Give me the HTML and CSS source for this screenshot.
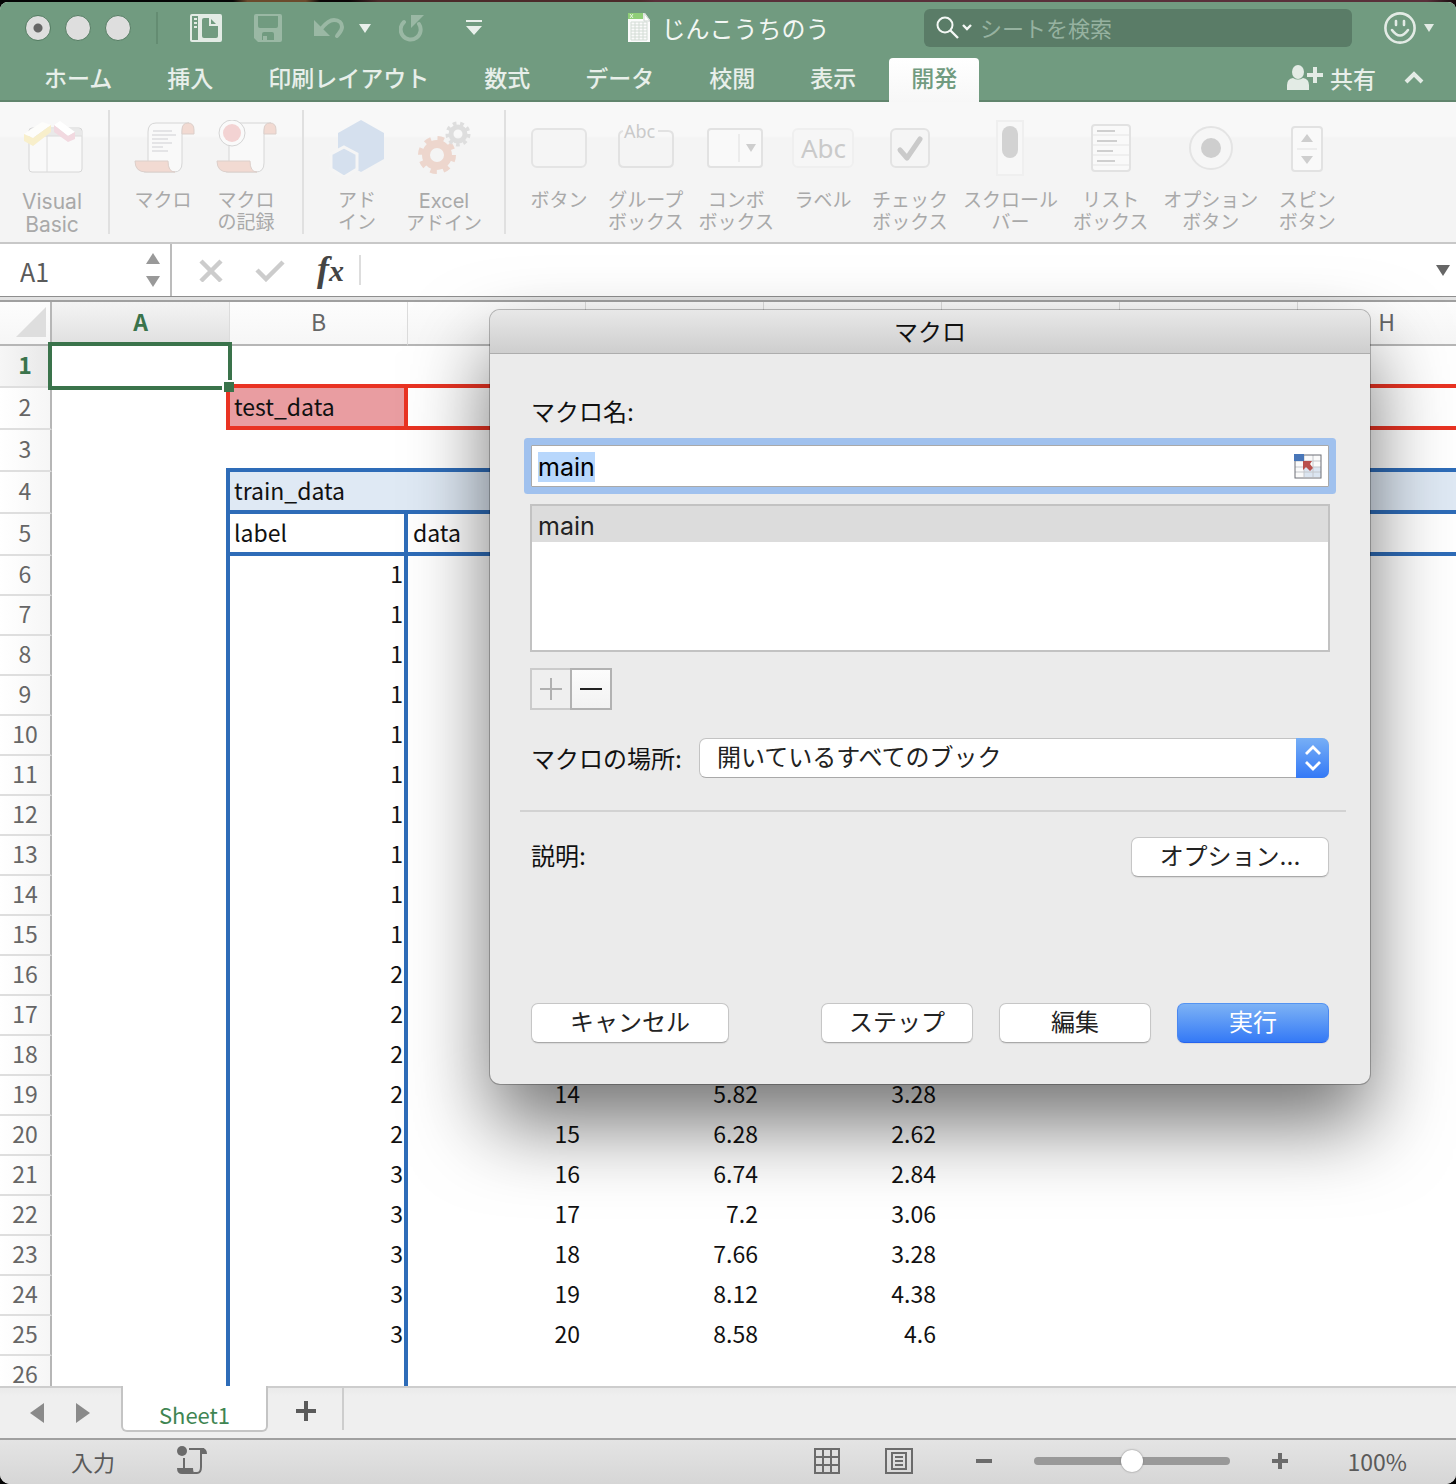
FILE: index.html
```html
<!DOCTYPE html>
<html lang="ja">
<head>
<meta charset="utf-8">
<title>じんこうちのう</title>
<link rel="stylesheet" href="styles.css">
</head>
<body>
<div class="window">
  <header class="titlebar">
    <div class="title-left">
      <div class="lights">
        <button class="light light-edited" aria-label="閉じる"></button>
        <button class="light" aria-label="しまう"></button>
        <button class="light" aria-label="拡大"></button>
      </div>
      <span class="title-rule"></span>
      <button class="plain tool-gallery" aria-label="ギャラリー">
        <svg width="32" height="28" viewBox="0 0 32 28"><path fill="#e3ebe5" fill-rule="evenodd" d="M2 0h28a2 2 0 0 1 2 2v24a2 2 0 0 1-2 2H2a2 2 0 0 1-2-2V2a2 2 0 0 1 2-2zM2 2v24h6V2zM14 4a2 2 0 0 0-2 2v16a2 2 0 0 0 2 2h12a2 2 0 0 0 2-2V12L20 4z"/><path d="M4 4h3v2H4zM4 8h3v2H4zM4 12h3v2H4z" fill="#e3ebe5"/><path d="M20 4v7h8" fill="none" stroke="#e3ebe5" stroke-width="2"/></svg>
      </button>
      <button class="plain tool-save" aria-label="保存" disabled>
        <svg width="28" height="28" viewBox="0 0 28 28"><path fill="#9ab8a4" fill-rule="evenodd" d="M2 0h24a2 2 0 0 1 2 2v24a2 2 0 0 1-2 2H4l-4-4V2a2 2 0 0 1 2-2zM4 2v10a2 2 0 0 0 2 2h16a2 2 0 0 0 2-2V2zM8 20v6h1v-4h4v4h7v-6a2 2 0 0 0-2-2h-8a2 2 0 0 0-2 2z"/></svg>
      </button>
      <button class="plain tool-undo" aria-label="元に戻す" disabled>
        <svg width="31" height="22" viewBox="0 0 31 22"><path d="M1 3v16h16z" fill="#9ab8a4"/><path d="M8 12c4-5 8-9 13-9 5 0 8 3 8 7 0 4-3 6-5 9" fill="none" stroke="#9ab8a4" stroke-width="4" stroke-linecap="round"/></svg>
      </button>
      <button class="plain tool-undo-menu" aria-label="元に戻す履歴">
        <svg width="12" height="9" viewBox="0 0 12 9"><path d="M0 0h12L6 9z" fill="#e9f0eb"/></svg>
      </button>
      <button class="plain tool-redo" aria-label="やり直し" disabled>
        <svg width="26" height="28" viewBox="0 0 26 28"><path d="M5 8a10 10 0 1 0 15 2" fill="none" stroke="#9ab8a4" stroke-width="4" stroke-linecap="round"/><path d="M12 1h13L12 14z" fill="#9ab8a4"/></svg>
      </button>
      <button class="plain tool-custom" aria-label="クイック アクセスのカスタマイズ">
        <svg width="18" height="16" viewBox="0 0 18 16"><path d="M1 0h16v2H1zM1 6h16l-8 9z" fill="#e9f0eb"/></svg>
      </button>
    </div>
    <div class="doc-title">
      <svg width="24" height="30" viewBox="0 0 24 30"><path d="M1 0h17l5 7v22H1z" fill="#fbfbfb"/><path d="M1 0h15v6H1z" fill="#8fce78"/><path d="M3 1l3 4M6 1L3 5" stroke="#e6f5df"/><path d="M17 0l6 8h-6z" fill="#fff" stroke="#cdd5cf"/><path d="M4 9h16v18H4zM4 12h16M4 15h16M4 18h16M4 21h16M4 24h16M8 9v18M12 9v18M16 9v18" fill="none" stroke="#d3dcd5"/></svg>
      <span class="doc-name">じんこうちのう</span>
    </div>
    <div class="title-right">
      <label class="search">
        <svg width="38" height="26" viewBox="0 0 38 26"><circle cx="9" cy="10" r="7.5" fill="none" stroke="#f4f8f5" stroke-width="2"/><path d="M14 15l8 8M27 10l4 4 4-4" fill="none" stroke="#f4f8f5" stroke-width="2.4"/></svg>
        <input type="text" placeholder="シートを検索" aria-label="シートを検索">
      </label>
      <button class="plain smile" aria-label="フィードバック">
        <svg width="50" height="32" viewBox="0 0 50 32"><circle cx="16" cy="16" r="14.6" fill="none" stroke="#e3ebe5" stroke-width="2.6"/><path d="M8 18q8 11 16 0M12 9v4M20 9v4" fill="none" stroke="#e3ebe5" stroke-width="2.6" stroke-linecap="round"/><path d="M40 12h10l-5 8z" fill="#e3ebe5"/></svg>
      </button>
    </div>
  </header>

  <nav class="tabs">
    <button class="tab">ホーム</button>
    <button class="tab">挿入</button>
    <button class="tab">印刷レイアウト</button>
    <button class="tab">数式</button>
    <button class="tab">データ</button>
    <button class="tab">校閲</button>
    <button class="tab">表示</button>
    <button class="tab tab-active">開発</button>
    <div class="share">
      <button class="plain share-button">
        <svg width="36" height="26" viewBox="0 0 36 26"><ellipse cx="11" cy="7" rx="6" ry="7" fill="#e3ebe5"/><path d="M0 25v-5q0-6 6-7 5 3 10 0 6 1 6 7v5zM20 8h6V2h4v6h6v4h-6v6h-4v-6h-6z" fill="#e3ebe5"/></svg>
        <span>共有</span>
      </button>
      <button class="plain" aria-label="リボンを折りたたむ">
        <svg width="20" height="14" viewBox="0 0 20 14"><path d="M2 11l8-8 8 8" fill="none" stroke="#e3ebe5" stroke-width="4"/></svg>
      </button>
    </div>
  </nav>

  <section class="ribbon">
    <div class="group group-first">
      <button class="command" disabled>
        <svg width="64" height="56" viewBox="0 0 64 56"><rect x="9" y="8" width="53" height="44" rx="3" fill="#f9f9f9" stroke="#d6d6d6"/><path d="M10 9h51v7H10z" fill="#e9e9e9"/><path d="M9 16h53M27 16v36" stroke="#dcdcdc"/><path d="M4 14L22 2l9 3-18 13z" fill="#fdfdfb"/><path d="M4 14l9 4 18-13v7L13 26l-9-5z" fill="#f8efcb"/><path d="M34 5l6-4 15 11-7 4z" fill="#fff"/><path d="M34 5l14 11 7-4v7l-7 3-14-10z" fill="#f2d9e0"/></svg>
        <span class="label label-latin">Visual<br>Basic</span>
      </button>
    </div>
    <div class="group">
      <button class="command" disabled>
        <svg width="64" height="56" viewBox="0 0 64 56"><path d="M17 41V12q0-9 8-9h33q-7 1-7 9v31q0 9-8 9H13" fill="#f9f9f9" stroke="#d6d6d6"/><path d="M51 14V10q0-7 6-7t6 7v4z" fill="#f2dad2" stroke="#dccfca"/><path d="M4 41h33q0 11 7 11H15Q4 52 4 41z" fill="#f2dad2" stroke="#dccfca"/><path d="M22 11h19M21 15h24M21 19h16M21 23h20M21 27h11M21 31h16" stroke="#e4e4e6" stroke-width="2"/></svg>
        <span class="label">マクロ</span>
      </button>
      <button class="command" disabled>
        <svg width="64" height="56" viewBox="0 0 64 56"><path d="M15 41V3h42q-7 1-7 9v31q0 9-8 9H12" fill="#f9f9f9" stroke="#d6d6d6"/><path d="M50 14V10q0-7 6-7t6 7v4z" fill="#f2dad2" stroke="#dccfca"/><path d="M3 41h33q0 11 7 11H14Q3 52 3 41z" fill="#f2dad2" stroke="#dccfca"/><circle cx="18" cy="13" r="13" fill="#fafafa" stroke="#d4d4d4"/><circle cx="18" cy="13" r="9" fill="#f3d3d3"/></svg>
        <span class="label">マクロ<br>の記録</span>
      </button>
    </div>
    <div class="group">
      <button class="command" disabled>
        <svg width="64" height="56" viewBox="0 0 64 56"><path d="M36 0l23 13v26L36 52 13 39V13z" fill="#d5e0ee"/><path d="M19 27l13 7v15l-13 8-13-8V34z" fill="#d5e0ee" stroke="#f5f5f5" stroke-width="3"/></svg>
        <span class="label">アド<br>イン</span>
      </button>
      <button class="command" disabled>
        <svg width="64" height="56" viewBox="0 0 64 56"><circle cx="25" cy="35" r="11" fill="none" stroke="#edd6cd" stroke-width="8"/><circle cx="25" cy="35" r="16.500" fill="none" stroke="#edd6cd" stroke-width="5" stroke-dasharray="6.480 6.480"/><circle cx="46" cy="14" r="7" fill="none" stroke="#dedede" stroke-width="5"/><circle cx="46" cy="14" r="10.500" fill="none" stroke="#dedede" stroke-width="4" stroke-dasharray="3.665 3.665"/></svg>
        <span class="label"><span class="latin">Excel</span><br>アドイン</span>
      </button>
    </div>
    <div class="group group-last">
      <button class="command" disabled>
        <svg width="64" height="56" viewBox="0 0 64 56"><rect x="5" y="9" width="54" height="38" rx="5" fill="#f5f5f5" stroke="#e4e4e4" stroke-width="2"/></svg>
        <span class="label">ボタン</span>
      </button>
      <button class="command" disabled>
        <svg width="64" height="56" viewBox="0 0 64 56"><path d="M9 11q-4 1-4 5v26q0 5 5 5h44q5 0 5-5V16q0-5-5-5H44" fill="none" stroke="#e2e2e2" stroke-width="2"/><text x="10" y="18" class="icon-text-small">Abc</text></svg>
        <span class="label">グループ<br>ボックス</span>
      </button>
      <button class="command" disabled>
        <svg width="64" height="56" viewBox="0 0 64 56"><rect x="4" y="9" width="54" height="38" rx="3" fill="#f9f9f9" stroke="#e2e2e2" stroke-width="2"/><path d="M35 14v28" stroke="#ececec" stroke-width="2"/><path d="M42 24h10l-5 8z" fill="#cecece"/></svg>
        <span class="label">コンボ<br>ボックス</span>
      </button>
      <button class="command" disabled>
        <svg width="64" height="56" viewBox="0 0 64 56"><rect x="2" y="9" width="60" height="38" rx="5" fill="#f6f6f6" stroke="#efefef" stroke-width="2"/><text x="10" y="38" class="icon-text-large">Abc</text></svg>
        <span class="label">ラベル</span>
      </button>
      <button class="command" disabled>
        <svg width="64" height="56" viewBox="0 0 64 56"><rect x="13" y="9" width="38" height="38" rx="5" fill="#f5f5f5" stroke="#e3e3e3" stroke-width="2"/><path d="M22 30l7 8 13-19" fill="none" stroke="#cacaca" stroke-width="5" stroke-linecap="round" stroke-linejoin="round"/></svg>
        <span class="label">チェック<br>ボックス</span>
      </button>
      <button class="command" disabled>
        <svg width="64" height="56" viewBox="0 0 64 56"><rect x="19" y="1" width="26" height="54" fill="#f7f7f7" stroke="#efefef" stroke-width="2"/><rect x="24" y="6" width="16" height="32" rx="8" fill="#d2d2d2"/></svg>
        <span class="label">スクロール<br>バー</span>
      </button>
      <button class="command" disabled>
        <svg width="64" height="56" viewBox="0 0 64 56"><rect x="13" y="5" width="38" height="46" rx="3" fill="#f9f9f9" stroke="#e2e2e2" stroke-width="2"/><path d="M14 15h36M14 25h36M14 35h36M14 45h36" stroke="#efefef" stroke-width="2"/><path d="M18 11h18M18 21h20M18 31h16M18 41h18" stroke="#cfcfcf" stroke-width="2"/></svg>
        <span class="label">リスト<br>ボックス</span>
      </button>
      <button class="command" disabled>
        <svg width="64" height="56" viewBox="0 0 64 56"><circle cx="32" cy="28" r="21" fill="#f6f6f6" stroke="#e4e4e4" stroke-width="2"/><circle cx="32" cy="28" r="10" fill="#cecece"/></svg>
        <span class="label">オプション<br>ボタン</span>
      </button>
      <button class="command" disabled>
        <svg width="64" height="56" viewBox="0 0 64 56"><rect x="17" y="7" width="30" height="44" rx="3" fill="#f9f9f9" stroke="#e2e2e2" stroke-width="2"/><path d="M22 29h20" stroke="#ededed" stroke-width="2"/><path d="M26 22h12l-6-8zM26 36h12l-6 8z" fill="#cecece"/></svg>
        <span class="label">スピン<br>ボタン</span>
      </button>
    </div>
  </section>

  <section class="formula-bar">
    <div class="name-box">
      <input type="text" value="A1" aria-label="名前ボックス">
      <div class="name-steps">
        <button class="plain" aria-label="上へ"><svg width="14" height="11" viewBox="0 0 14 11"><path d="M0 11h14L7 0z" fill="#999"/></svg></button>
        <button class="plain" aria-label="下へ"><svg width="14" height="11" viewBox="0 0 14 11"><path d="M0 0h14L7 11z" fill="#999"/></svg></button>
      </div>
    </div>
    <div class="formula-tools">
      <button class="plain" aria-label="キャンセル" disabled><svg width="24" height="24" viewBox="0 0 24 24"><path d="M2 3l20 20M22 3L2 23" stroke="#ccc" stroke-width="4.500"/></svg></button>
      <button class="plain" aria-label="入力" disabled><svg width="30" height="24" viewBox="0 0 30 24"><path d="M2 12l9 9L28 4" fill="none" stroke="#ccc" stroke-width="4.500"/></svg></button>
      <button class="plain fx" aria-label="関数の挿入"><span class="fx-f">f</span><span class="fx-x">x</span></button>
    </div>
    <input class="formula-input" type="text" aria-label="数式">
    <button class="plain" aria-label="数式バーを広げる"><svg width="14" height="11" viewBox="0 0 14 11"><path d="M0 0h14L7 11z" fill="#666"/></svg></button>
  </section>

  <main class="sheet">
    <table class="grid">
      <colgroup><col class="col-head"><col><col><col><col><col><col><col><col></colgroup>
      <thead>
        <tr><th class="corner"><svg width="30" height="30" viewBox="0 0 30 30"><path d="M30 0v30H0z" fill="#dedede"/></svg></th><th class="col-on">A</th><th>B</th><th></th><th></th><th></th><th></th><th></th><th>H</th></tr>
      </thead>
      <tbody>
        <tr class="tall"><th class="row-on">1</th><td class="selected"><span class="cursor"></span><span class="handle"></span></td><td></td><td></td><td></td><td></td><td></td><td></td><td></td></tr>
        <tr class="tall test"><th>2</th><td></td><td class="lead">test_data</td><td></td><td></td><td></td><td></td><td></td><td></td></tr>
        <tr class="tall"><th>3</th><td></td><td></td><td></td><td></td><td></td><td></td><td></td><td></td></tr>
        <tr class="tall train"><th>4</th><td></td><td class="lead">train_data</td><td></td><td></td><td></td><td></td><td></td><td></td></tr>
        <tr class="tall fields"><th>5</th><td></td><td class="lead">label</td><td>data</td><td></td><td></td><td></td><td></td><td></td></tr>
        <tr class="num"><th>6</th><td></td><td class="lead">1</td><td></td><td></td><td></td><td></td><td></td><td></td></tr>
        <tr class="num"><th>7</th><td></td><td class="lead">1</td><td></td><td></td><td></td><td></td><td></td><td></td></tr>
        <tr class="num"><th>8</th><td></td><td class="lead">1</td><td></td><td></td><td></td><td></td><td></td><td></td></tr>
        <tr class="num"><th>9</th><td></td><td class="lead">1</td><td></td><td></td><td></td><td></td><td></td><td></td></tr>
        <tr class="num"><th>10</th><td></td><td class="lead">1</td><td></td><td></td><td></td><td></td><td></td><td></td></tr>
        <tr class="num"><th>11</th><td></td><td class="lead">1</td><td></td><td></td><td></td><td></td><td></td><td></td></tr>
        <tr class="num"><th>12</th><td></td><td class="lead">1</td><td></td><td></td><td></td><td></td><td></td><td></td></tr>
        <tr class="num"><th>13</th><td></td><td class="lead">1</td><td></td><td></td><td></td><td></td><td></td><td></td></tr>
        <tr class="num"><th>14</th><td></td><td class="lead">1</td><td></td><td></td><td></td><td></td><td></td><td></td></tr>
        <tr class="num"><th>15</th><td></td><td class="lead">1</td><td></td><td></td><td></td><td></td><td></td><td></td></tr>
        <tr class="num"><th>16</th><td></td><td class="lead">2</td><td></td><td></td><td></td><td></td><td></td><td></td></tr>
        <tr class="num"><th>17</th><td></td><td class="lead">2</td><td></td><td></td><td></td><td></td><td></td><td></td></tr>
        <tr class="num"><th>18</th><td></td><td class="lead">2</td><td></td><td></td><td></td><td></td><td></td><td></td></tr>
        <tr class="num"><th>19</th><td></td><td class="lead">2</td><td>14</td><td>5.82</td><td>3.28</td><td></td><td></td><td></td></tr>
        <tr class="num"><th>20</th><td></td><td class="lead">2</td><td>15</td><td>6.28</td><td>2.62</td><td></td><td></td><td></td></tr>
        <tr class="num"><th>21</th><td></td><td class="lead">3</td><td>16</td><td>6.74</td><td>2.84</td><td></td><td></td><td></td></tr>
        <tr class="num"><th>22</th><td></td><td class="lead">3</td><td>17</td><td>7.2</td><td>3.06</td><td></td><td></td><td></td></tr>
        <tr class="num"><th>23</th><td></td><td class="lead">3</td><td>18</td><td>7.66</td><td>3.28</td><td></td><td></td><td></td></tr>
        <tr class="num"><th>24</th><td></td><td class="lead">3</td><td>19</td><td>8.12</td><td>4.38</td><td></td><td></td><td></td></tr>
        <tr class="num"><th>25</th><td></td><td class="lead">3</td><td>20</td><td>8.58</td><td>4.6</td><td></td><td></td><td></td></tr>
        <tr class="num"><th>26</th><td></td><td class="lead"></td><td></td><td></td><td></td><td></td><td></td><td></td></tr>
      </tbody>
    </table>
  </main>

  <footer>
    <div class="sheet-bar">
      <button class="plain" aria-label="前のシート"><svg width="14" height="20" viewBox="0 0 14 20"><path d="M14 0v20L0 10z" fill="#8a8a8a"/></svg></button>
      <button class="plain sheet-next" aria-label="次のシート"><svg width="14" height="20" viewBox="0 0 14 20"><path d="M0 0v20l14-10z" fill="#8a8a8a"/></svg></button>
      <button class="sheet-tab">Sheet1</button>
      <button class="plain sheet-add" aria-label="シートの追加"><svg width="20" height="20" viewBox="0 0 20 20"><path d="M8 0h4v8h8v4h-8v8H8v-8H0V8h8z" fill="#5a5a5a"/></svg></button>
    </div>
    <div class="status-bar">
      <span class="status-mode">入力</span>
      <button class="plain" aria-label="マクロの記録"><svg width="32" height="30" viewBox="0 0 32 30"><circle cx="5" cy="5" r="5" fill="#6b6b6b"/><path d="M7 12v10M12 3h15M24 4v17q0 6-4 6h-3" fill="none" stroke="#6b6b6b" stroke-width="2"/><path d="M23 8V4q1-2 3-2 4 1 4 6zM0 22h16q0 6 4 6H5q-5 0-5-6z" fill="#6b6b6b"/></svg></button>
      <div class="status-right">
        <button class="plain" aria-label="標準"><svg width="26" height="26" viewBox="0 0 26 26"><path d="M1 1h24v24H1zM9 1v24M17 1v24M1 9h24M1 17h24" fill="none" stroke="#6b6b6b" stroke-width="2"/></svg></button>
        <button class="plain view-page" aria-label="ページ レイアウト"><svg width="28" height="26" viewBox="0 0 28 26"><path d="M1 1h26v24H1zM7 5h14v16H7zM10 9h8M10 13h8M10 17h8" fill="none" stroke="#6b6b6b" stroke-width="2"/></svg></button>
        <button class="plain zoom-out" aria-label="縮小"><svg width="16" height="16" viewBox="0 0 16 16"><path d="M0 6h16v4H0z" fill="#6b6b6b"/></svg></button>
        <input class="zoom" type="range" min="0" max="100" value="50" aria-label="ズーム">
        <button class="plain zoom-in" aria-label="拡大"><svg width="16" height="16" viewBox="0 0 16 16"><path d="M6 0h4v6h6v4h-6v6H6v-6H0V6h6z" fill="#6b6b6b"/></svg></button>
        <span class="zoom-value">100%</span>
      </div>
    </div>
  </footer>

  <form class="dialog" role="dialog" aria-labelledby="dialog-title">
    <h1 class="dialog-title" id="dialog-title">マクロ</h1>
    <div class="dialog-body">
      <label class="field-label" for="macro-name">マクロ名:</label>
      <div class="name-field">
        <input type="text" id="macro-name" value="main" autocomplete="off" spellcheck="false">
        <button class="plain" type="button" aria-label="範囲の選択"><svg width="28" height="25" viewBox="0 0 28 25"><rect x="1" y="1" width="26" height="22" fill="#fafafa"/><path d="M10 13h17v10H10z" fill="#dbe5f1"/><path d="M10 1v22M19 1v22M1 7h26M1 13h26M1 18h26" stroke="#c4c7cc"/><rect x="1" y="1" width="26" height="23" fill="none" stroke="#6c6f76"/><path d="M0 0h10v7H0z" fill="#4876b8"/><path d="M9 7h9l-2 3 3 4-3 3-4-4-3 3z" fill="#b9504c"/></svg></button>
      </div>
      <ul class="macro-list"><li>main</li></ul>
      <div class="list-buttons">
        <button type="button" aria-label="追加" disabled><svg width="22" height="22" viewBox="0 0 22 22"><path d="M0 11h22M11 0v22" stroke="#b0b0b0" stroke-width="2"/></svg></button>
        <button type="button" aria-label="削除"><svg width="22" height="22" viewBox="0 0 22 22"><path d="M0 11h22" stroke="#222" stroke-width="2"/></svg></button>
      </div>
      <div class="place">
        <label class="field-label" for="macro-place">マクロの場所:</label>
        <div class="select-wrap">
          <select id="macro-place"><option>開いているすべてのブック</option></select>
          <span class="select-arrows"><svg width="16" height="26" viewBox="0 0 16 26"><path d="M1 9l7-7 7 7M1 17l7 7 7-7" fill="none" stroke="#fff" stroke-width="2.800"/></svg></span>
        </div>
      </div>
      <hr>
      <div class="about">
        <span class="field-label">説明:</span>
        <button class="push push-wide" type="button">オプション...</button>
      </div>
      <div class="actions">
        <button class="push push-wide" type="button">キャンセル</button>
        <button class="push push-step" type="button">ステップ</button>
        <button class="push" type="button">編集</button>
        <button class="push push-default" type="button">実行</button>
      </div>
    </div>
  </form>
</div>
<script>
  const macroName = document.getElementById("macro-name");
  macroName.focus();
  macroName.select();
</script>
</body>
</html>
```

FILE: styles.css
```css
* {
  box-sizing: border-box;
}

body {
  margin: 0;
  padding-top: 2px;
  background: linear-gradient(90deg, #050505 0 16%, #6b4a2c 17% 21%, #0a0606 22% 24%, #4b2a2a 26% 44%, #59303a 45% 98%, #140a0c) top / 100% 4px no-repeat #050505;
  font-family: Inter, "Noto Sans CJK JP", sans-serif;
  color: #222;
}

button,
input,
select {
  font: inherit;
  color: inherit;
}

svg {
  display: block;
  flex: none;
}

.plain {
  display: flex;
  align-items: center;
  border: 0;
  padding: 0;
  background: none;
}

.window {
  position: relative;
  display: flex;
  flex-direction: column;
  height: calc(100vh - 2px);
  border-radius: 8px 8px 10px 10px;
  overflow: hidden;
  background: #fff;
}

/* Title bar */

.titlebar {
  flex: none;
  display: grid;
  grid-template-columns: 1fr auto 1fr;
  align-items: center;
  height: 52px;
  background: #719b80;
}

.title-left,
.lights,
.doc-title,
.title-right {
  display: flex;
  align-items: center;
}

.title-left {
  padding-left: 25px;
}

.lights {
  gap: 14px;
}

.light {
  width: 26px;
  height: 26px;
  padding: 0;
  border: 1px solid #557d63;
  border-radius: 50%;
  background: #dedede;
}

.light-edited {
  background: radial-gradient(circle, #666 0 4px, #dedede 5px);
}

.title-rule {
  width: 2px;
  height: 32px;
  margin: 0 32px 0 25px;
  background: #648c72;
}

.tool-save {
  margin-left: 32px;
}

.tool-undo {
  margin-left: 31px;
}

.tool-undo-menu {
  margin-left: 15px;
}

.tool-redo {
  margin-left: 28px;
}

.tool-custom {
  margin-left: 40px;
}

.doc-title {
  gap: 11px;
  color: #f3f7f4;
  font-size: 24px;
  line-height: 32px;
}

.doc-name {
  padding-top: 4px;
}

.title-right {
  justify-content: flex-end;
  gap: 32px;
  padding-right: 22px;
}

.search {
  display: flex;
  align-items: center;
  gap: 6px;
  width: 428px;
  height: 38px;
  padding: 0 12px;
  border-radius: 6px;
  background: #5a7c67;
}

.search input {
  flex: 1;
  min-width: 0;
  height: 34px;
  padding: 2px 0 0;
  border: 0;
  outline: 0;
  background: none;
  font-size: 22px;
  color: #fff;
}

.search input::placeholder {
  color: #96b2a0;
}

/* Ribbon tabs */

.tabs {
  flex: none;
  display: flex;
  align-items: flex-end;
  gap: 11px;
  height: 48px;
  padding: 0 32px 0 22px;
  background: #719b80;
  box-shadow: inset 0 -2px #61856d;
}

.tab {
  height: 44px;
  padding: 0 22px 2px;
  border: 0;
  border-radius: 4px 4px 0 0;
  background: none;
  color: #e8efea;
  font-size: 23px;
  font-weight: 500;
  line-height: 40px;
}

.tab-active {
  background: linear-gradient(#fff, #f7f7f7);
  color: #719b80;
}

.share {
  display: flex;
  align-items: center;
  gap: 28px;
  height: 48px;
  margin-left: auto;
}

.share-button {
  gap: 7px;
  color: #e8efea;
  font-size: 23px;
  font-weight: 500;
}

/* Ribbon */

.ribbon {
  flex: none;
  display: flex;
  padding: 8px 0;
  border-bottom: 2px solid #c8c8c8;
  background: linear-gradient(#f8f8f8 0 34px, #f4f4f4 36px);
}

.group {
  display: flex;
  gap: 15px;
  padding: 0 22px 0 19px;
  border-right: 2px solid #e0e0e0;
}

.group-first {
  padding-left: 18px;
}

.group-last {
  border-right: 0;
}

.command {
  display: flex;
  flex-direction: column;
  align-items: center;
  gap: 14px;
  min-width: 68px;
  padding: 10px 0 0;
  border: 0;
  background: none;
  color: #a9a9a9;
  font-size: 19px;
  line-height: 22px;
}

.label {
  height: 44px;
  white-space: nowrap;
}

.label-latin {
  font-size: 21px;
  line-height: 23px;
}

.latin {
  font-size: 20px;
}

.icon-text-small,
.icon-text-large {
  font-family: "Noto Sans", sans-serif;
  fill: #cacaca;
}

.icon-text-small {
  font-size: 18px;
}

.icon-text-large {
  font-size: 26px;
}

/* Formula bar */

.formula-bar {
  flex: none;
  display: flex;
  align-items: center;
  height: 58px;
  padding: 0 6px 6px 0;
  background: linear-gradient(#8e8e8e 0 1px, #e2e2e2 1px 4px, #a0a0a0 4px 6px) bottom / 100% 6px no-repeat #fff;
}

.name-box {
  display: flex;
  align-items: center;
  align-self: stretch;
  width: 172px;
  padding: 0 10px 0 20px;
  border-right: 2px solid #bcbcbc;
}

.name-box input {
  flex: 1;
  min-width: 0;
  padding: 2px 0 0;
  border: 0;
  outline: 0;
  background: none;
  color: #5a5a5a;
  font-family: "Noto Sans CJK JP", sans-serif;
  font-size: 25px;
}

.name-steps {
  display: flex;
  flex-direction: column;
  gap: 12px;
}

.formula-tools {
  display: flex;
  align-items: center;
  gap: 32px;
  height: 30px;
  padding: 0 15px 0 27px;
  border-right: 2px solid #ddd;
}

.fx {
  align-items: baseline;
  color: #444;
  font-family: "Liberation Serif", serif;
  font-style: italic;
  font-weight: bold;
}

.fx-f {
  font-size: 36px;
  line-height: 30px;
}

.fx-x {
  font-size: 30px;
  line-height: 30px;
}

.formula-input {
  flex: 1;
  min-width: 0;
  border: 0;
  outline: 0;
}

/* Sheet */

.sheet {
  flex: 1;
  min-height: 0;
  overflow: hidden;
  background: #fff;
}

.grid {
  width: 1476px;
  table-layout: fixed;
  border-collapse: separate;
  border-spacing: 0;
  font-family: "Noto Sans CJK JP", sans-serif;
  font-size: 23px;
  line-height: 28px;
  color: #111;
}

.col-head {
  width: 52px;
}

.grid th,
.grid td {
  height: 40px;
  padding: 0;
}

.grid th {
  padding-bottom: 4px;
  color: #666;
  font-weight: normal;
}

.grid thead th {
  height: 44px;
  border-right: 1px solid #dcdcdc;
  border-bottom: 2px solid #b6b6b6;
  background: linear-gradient(#fdfdfd, #f6f6f6);
}

.grid thead .corner {
  padding: 0 4px 2px 16px;
  border-right: 2px solid #b6b6b6;
}

.grid thead .col-on {
  background: linear-gradient(#f4f4f4, #e0e0e0);
}

.grid tbody th {
  border-right: 2px solid #b6b6b6;
  border-bottom: 2px solid #dedede;
  background: linear-gradient(90deg, #fff, #f6f6f6);
}

.grid thead .col-on,
.grid tbody .row-on {
  color: #3a734b;
  font-weight: bold;
}

.grid tbody .row-on {
  background: linear-gradient(90deg, #f6f6f6, #e8e8e8);
}

.grid .tall th,
.grid .tall td {
  height: 42px;
}

.grid .tall td {
  padding: 0 0 3px 5px;
}

.grid .tall td.lead {
  padding-left: 4px;
}

.num td {
  text-align: right;
}

.grid .num td {
  padding: 0 6px 6px 0;
}

.grid .num td.lead {
  padding-right: 1px;
}

.test td + td {
  border-bottom: 4px solid #e93323;
  box-shadow: 0 -4px #e93323;
}

.test .lead {
  border-right: 4px solid #e93323;
  background: #e99da1;
}

.test td.lead {
  box-shadow: -4px 0 #e93323, 0 -4px #e93323, -4px -4px #e93323;
}

.train td + td {
  border-bottom: 4px solid #2e6cb8;
  background: #dfe9f4;
  box-shadow: 0 -4px #2e6cb8;
}

.train td.lead {
  box-shadow: -4px 0 #2e6cb8, 0 -4px #2e6cb8, -4px -4px #2e6cb8;
}

.fields td + td {
  border-bottom: 4px solid #2e6cb8;
}

.fields td.lead,
.num td.lead {
  border-right: 4px solid #2e6cb8;
  box-shadow: -4px 0 #2e6cb8;
}

.selected {
  position: relative;
}

.cursor {
  position: absolute;
  inset: -4px -2px -2px -4px;
  border: 4px solid #3a734b;
}

.handle {
  position: absolute;
  z-index: 1;
  right: -4px;
  bottom: -4px;
  width: 10px;
  height: 10px;
  background: #3a734b;
  box-shadow: -2px -2px #fff, -2px 0 #fff, 0 -2px #fff;
}

/* Sheet tabs and status bar */

footer {
  flex: none;
}

.sheet-bar {
  display: flex;
  align-items: center;
  height: 52px;
  padding: 2px 0 0 30px;
  background: linear-gradient(#cdcdcd 0 2px, #eaeaea 2px, #efefef 10px);
}

.sheet-next {
  margin: 0 31px 0 32px;
}

.sheet-tab {
  align-self: flex-start;
  width: 147px;
  height: 46px;
  margin-top: -2px;
  padding: 11px 0 0;
  border: 2px solid #c4c4c4;
  border-top: 0;
  border-radius: 0 0 6px 6px;
  background: #fff;
  color: #3f8552;
  font-family: "Noto Sans CJK JP", sans-serif;
  font-size: 22px;
  line-height: 28px;
}

.sheet-add {
  align-self: flex-start;
  height: 42px;
  padding: 4px 26px 0 28px;
  border-right: 2px solid #cdcdcd;
}

.status-bar {
  display: flex;
  align-items: center;
  height: 46px;
  padding: 0 49px 2px 71px;
  border-top: 2px solid #a0a0a0;
  background: linear-gradient(#e4e4e4, #d6d6d6);
  color: #5a5a5a;
  font-family: "Noto Sans CJK JP", sans-serif;
  font-size: 22px;
  line-height: 30px;
}

.status-mode {
  margin-right: 62px;
}

.status-right {
  display: flex;
  align-items: center;
  margin-left: auto;
}

.view-page {
  margin-left: 45px;
}

.zoom-out {
  margin-left: 63px;
}

.zoom {
  appearance: none;
  width: 196px;
  height: 24px;
  margin: 0 42px;
  background: none;
}

.zoom::-webkit-slider-runnable-track {
  height: 8px;
  border-radius: 4px;
  background: #999;
}

.zoom::-webkit-slider-thumb {
  appearance: none;
  width: 22px;
  height: 22px;
  margin-top: -7px;
  border-radius: 50%;
  background: #fff;
  box-shadow: 0 0 2px #777;
}

.zoom-value {
  margin-left: 60px;
  font-size: 23px;
}

/* Macro dialog, floating over the sheet */

.dialog {
  position: absolute;
  top: 308px;
  left: 490px;
  width: 880px;
  border-radius: 10px;
  background: #ebebeb;
  box-shadow: 0 0 0 1px rgba(0, 0, 0, 0.25), 0 40px 80px rgba(0, 0, 0, 0.55);
  font-size: 24px;
  line-height: 32px;
}

.dialog-title {
  margin: 0;
  height: 44px;
  border-bottom: 1px solid #adadad;
  border-radius: 10px 10px 0 0;
  background: linear-gradient(#e8e8e8, #cecece);
  color: #111;
  font-size: 24px;
  font-weight: normal;
  line-height: 45px;
  text-align: center;
}

.dialog-body {
  display: flex;
  flex-direction: column;
  padding: 43px 41px 41px;
}

.field-label {
  color: #111;
}

.name-field {
  display: flex;
  align-items: center;
  height: 42px;
  margin-top: 16px;
  padding: 0 6px;
  border: 1px solid #a9a9a9;
  background: #fff;
  box-shadow: 0 0 0 7px #a0c1ee;
  border-radius: 1px;
}

.name-field input {
  flex: 1;
  min-width: 0;
  height: 38px;
  padding: 2px 0 0;
  border: 0;
  outline: 0;
  background: none;
  color: #000;
  font-size: 25px;
}

.name-field input::selection {
  background: #b8d7fc;
  color: #000;
}

.macro-list {
  height: 148px;
  margin: 17px -1px 0;
  padding: 0;
  border: 2px solid #c2c2c2;
  background: #fff;
  font-size: 25px;
  list-style: none;
}

.macro-list li {
  padding: 4px 6px 0;
  background: #dcdcdc;
}

.list-buttons {
  display: flex;
  margin: 16px -1px 0;
}

.list-buttons button {
  display: grid;
  place-items: center;
  width: 42px;
  height: 42px;
  padding: 0;
  border: 2px solid #b2b2b2;
  background: linear-gradient(#fcfcfc, #f2f2f2);
}

.list-buttons button:disabled {
  width: 40px;
  border-color: #cbcbcb;
  border-right: 0;
  background: #efefef;
}

.place {
  display: flex;
  align-items: center;
  gap: 17px;
  margin-top: 28px;
}

.place .field-label {
  padding-top: 4px;
}

.select-wrap {
  position: relative;
  flex: 1;
  height: 40px;
}

.select-wrap select {
  appearance: none;
  width: 100%;
  height: 40px;
  padding: 0 40px 0 17px;
  border: 1px solid #c3c3c3;
  border-bottom-color: #a9a9a9;
  border-radius: 7px;
  background: #fff;
}

.select-arrows {
  position: absolute;
  top: 0;
  right: 0;
  display: grid;
  place-items: center;
  width: 33px;
  height: 40px;
  border-radius: 0 7px 7px 0;
  background: linear-gradient(#77aff6, #3479f6);
  pointer-events: none;
}

.dialog hr {
  height: 2px;
  margin: 32px -17px 25px -11px;
  border: 0;
  background: #d2d2d2;
}

.about,
.actions {
  display: flex;
  align-items: center;
  justify-content: space-between;
}

.push {
  width: 152px;
  height: 40px;
  padding: 0;
  border: 1px solid #c6c6c6;
  border-bottom-color: #a9a9a9;
  border-radius: 7px;
  background: #fff;
  line-height: 36px;
  box-shadow: 0 1px 1px rgba(0, 0, 0, 0.08);
}

.push-wide {
  width: 198px;
}

.actions {
  gap: 26px;
  margin-top: 126px;
}

.push-step {
  margin-left: auto;
}

.push-default {
  border-color: #5494f2 #4a87f0 #2563ee;
  background: linear-gradient(#7db2f5, #3479f6);
  color: #fff;
}
```
